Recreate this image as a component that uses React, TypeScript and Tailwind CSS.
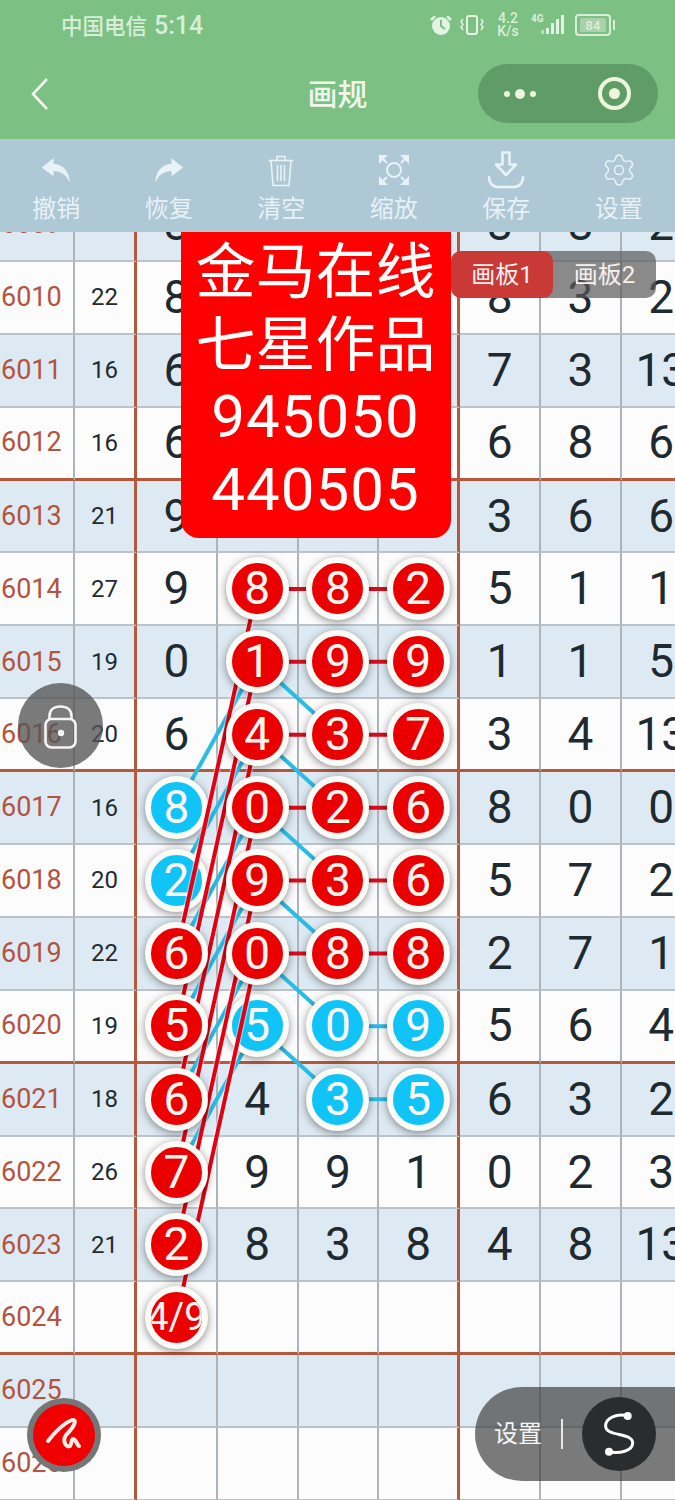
import React from "react";
import { Settings } from "lucide-react";

const SANS = "font-['Roboto','Noto_Sans_CJK_SC',sans-serif]";

type Ball = { v: string; c: "r" | "b" };
const r = (v: string): Ball => ({ v, c: "r" });
const b = (v: string): Ball => ({ v, c: "b" });
type Cell = string | Ball;

const ROWS: { id: string; sum: string; cells: Cell[] }[] = [
  { id: "6009", sum: "16", cells: ["8", "", "", "", "8", "8", "2"] },
  { id: "6010", sum: "22", cells: ["8", "", "", "", "8", "3", "2"] },
  { id: "6011", sum: "16", cells: ["6", "", "", "", "7", "3", "13"] },
  { id: "6012", sum: "16", cells: ["6", "", "", "", "6", "8", "6"] },
  { id: "6013", sum: "21", cells: ["9", "", "", "", "3", "6", "6"] },
  { id: "6014", sum: "27", cells: ["9", r("8"), r("8"), r("2"), "5", "1", "1"] },
  { id: "6015", sum: "19", cells: ["0", r("1"), r("9"), r("9"), "1", "1", "5"] },
  { id: "6016", sum: "20", cells: ["6", r("4"), r("3"), r("7"), "3", "4", "13"] },
  { id: "6017", sum: "16", cells: [b("8"), r("0"), r("2"), r("6"), "8", "0", "0"] },
  { id: "6018", sum: "20", cells: [b("2"), r("9"), r("3"), r("6"), "5", "7", "2"] },
  { id: "6019", sum: "22", cells: [r("6"), r("0"), r("8"), r("8"), "2", "7", "1"] },
  { id: "6020", sum: "19", cells: [r("5"), b("5"), b("0"), b("9"), "5", "6", "4"] },
  { id: "6021", sum: "18", cells: [r("6"), "4", b("3"), b("5"), "6", "3", "2"] },
  { id: "6022", sum: "26", cells: [r("7"), "9", "9", "1", "0", "2", "3"] },
  { id: "6023", sum: "21", cells: [r("2"), "8", "3", "8", "4", "8", "13"] },
  { id: "6024", sum: "", cells: [r("4/9"), "", "", "", "", "", ""] },
  { id: "6025", sum: "", cells: ["", "", "", "", "", "", ""] },
  { id: "6026", sum: "", cells: ["", "", "", "", "", "", ""] },
];

const ROW_H = 72.9;
const COLX = [176.4, 257.2, 338, 418.3];
const py = (i: number) => ROW_H * i + ROW_H / 2 - 1;
type Seg = [number, number, number, number];

// [column, row index, column, row index]
const CYAN: Seg[] = [
  [0, 8, 1, 6], [0, 9, 1, 7], [0, 10, 1, 8], [0, 11, 1, 9], [0, 12, 1, 10], [0, 13, 1, 11],
  [1, 6, 2, 7], [1, 7, 2, 8], [1, 8, 2, 9], [1, 9, 2, 10], [1, 10, 2, 11], [1, 11, 2, 12],
  [2, 11, 3, 11], [2, 12, 3, 12],
];
const RED_LONG: Seg[] = [
  [1, 5, 0, 10], [1, 6, 0, 11], [1, 7, 0, 12], [1, 8, 0, 13], [1, 9, 0, 14], [1, 10, 0, 15],
];
const RED_ROW: Seg[] = [
  [1, 5, 2, 5], [2, 5, 3, 5], [1, 6, 2, 6], [2, 6, 3, 6], [1, 7, 2, 7], [2, 7, 3, 7],
  [1, 8, 2, 8], [2, 8, 3, 8], [1, 9, 2, 9], [2, 9, 3, 9], [1, 10, 2, 10], [2, 10, 3, 10],
];

function Segs({ segs, color, width, opacity }: { segs: Seg[]; color: string; width: number; opacity?: number }) {
  return (
    <g stroke={color} strokeWidth={width} opacity={opacity}>
      {segs.map((s, i) => (
        <line key={i} x1={COLX[s[0]]} y1={py(s[1])} x2={COLX[s[2]]} y2={py(s[3])} />
      ))}
    </g>
  );
}

function BallView({ ball }: { ball: Ball }) {
  const red = ball.c === "r";
  return (
    <div
      className={`relative flex h-[63px] w-[63px] shrink-0 items-center justify-center rounded-full border-[6px] border-[#fbfbf8] text-[#fdf6ee] shadow-[0_2px_8px_rgba(0,0,0,0.45)] ${
        red ? "z-40 bg-[#ea0000]" : "z-20 bg-[#10c4f8]"
      } ${ball.v.length > 1 ? "overflow-hidden text-[38px]" : "text-[46px]"}`}
    >
      {ball.v}
    </div>
  );
}

function Row({ row, i }: { row: (typeof ROWS)[number]; i: number }) {
  const thick = row.id === "6012" || row.id === "6016" || row.id === "6020" || row.id === "6024";
  const bg = i % 2 === 0 ? "bg-[#deeaf3]" : "bg-[#fcfcfc]";
  const bot = thick ? "border-b-[3px] border-b-[#b5583c]" : "border-b-2 border-b-[#bcc3c8]";
  return (
    <div className={`grid h-[72.9px] grid-cols-[75px_62px_80.8px_80.8px_80.8px_80.8px_80.8px_80.8px_81px] ${bg}`}>
      <div className={`flex items-center justify-start border-r-2 border-r-[#adb4b9] pl-[1px] text-[27px] text-[#b4533f] ${bot}`}>{row.id}</div>
      <div className={`flex items-center justify-center border-r-[3px] border-r-[#b5583c] text-[24px] text-[#232a30] ${bot}`}>{row.sum}</div>
      {row.cells.map((c, j) => (
        <div
          key={j}
          className={`flex items-center justify-center whitespace-nowrap border-r-2 text-[46px] font-normal text-[#1f2a30] ${bot} ${
            j === 3 ? "border-r-[#b5583c] border-r-[3px]" : "border-r-[#adb4b9]"
          }`}
        >
          {typeof c === "string" ? c : <BallView ball={c} />}
        </div>
      ))}
    </div>
  );
}

function ToolIcon({ n }: { n: number }) {
  const c = "#e9f2f6";
  if (n === 0)
    return (
      <svg width="30" height="26" viewBox="0 0 24 21" fill={c}>
        <path d="M10 1 L0.5 8.5 L10 15.5 V11.5 C15 11.5 20 13.5 23 20.5 C23 12.5 18 6 10 5.5 Z" />
      </svg>
    );
  if (n === 1)
    return (
      <svg width="30" height="26" viewBox="0 0 24 21" fill={c}>
        <path d="M14 1 L23.5 8.5 L14 15.5 V11.5 C9 11.5 4 13.5 1 20.5 C1 12.5 6 6 14 5.5 Z" />
      </svg>
    );
  if (n === 2)
    return (
      <svg width="28" height="33" viewBox="0 0 28 33" fill="none" stroke={c} strokeWidth="1.6">
        <path d="M1.5 6.5H26.5M10 6V2.5H18V6M4 6.5L6 31.5H22L24 6.5" />
        <path d="M10.5 11V27M14 11V27M17.5 11V27" />
      </svg>
    );
  if (n === 3)
    return (
      <svg width="32" height="32" viewBox="0 0 32 32" fill="none" stroke={c} strokeWidth="2">
        <circle cx="16" cy="16" r="7" />
        <path d="M2 2L9 9M30 2L23 9M2 30L9 23M30 30L23 23" />
        <path d="M1 1H10L1 10ZM31 1H22L31 10ZM1 31H10L1 22ZM31 31H22L31 22Z" fill={c} stroke="none" />
      </svg>
    );
  if (n === 4)
    return (
      <svg width="38" height="38" viewBox="0 0 38 38" fill="none" stroke={c} strokeWidth="2.6" strokeLinejoin="round">
        <path d="M15.5 1.5H22.5V13.5H29L19 24L9 13.5H15.5Z" />
        <path d="M2 26C2 32 6 36 11 36H27C32 36 36 32 36 26" strokeLinecap="round" />
      </svg>
    );
  return <Settings size={36} strokeWidth={1} color={c} />;
}

const TOOLS = ["撤销", "恢复", "清空", "缩放", "保存", "设置"];

export default function App() {
  return (
    <div className={`relative flex h-[1500px] w-[675px] flex-col overflow-hidden bg-[#fcfcfc] ${SANS}`}>
      {/* status + nav */}
      <header className="relative z-50 h-[139px] shrink-0 bg-[#7cc084]">
        <div className="flex h-[50px] items-center pl-[61px] pr-[60px] text-[#d9eed9]">
          <span className="flex items-baseline whitespace-nowrap text-[21.5px] font-medium leading-none">
            中国电信<span className="ml-[7px] text-[25px]">5:14</span>
          </span>
          <div className="ml-auto flex items-center">
            <svg width="24" height="22" viewBox="0 0 24 22" className="mr-[6px]" fill="#e4f3e4">
              <circle cx="12" cy="12" r="9" />
              <path d="M1 5L5 1.5L7 3L3 7ZM23 5L19 1.5L17 3L21 7Z" />
              <path d="M12 6V12L16 15" stroke="#7cc084" strokeWidth="2" fill="none" />
            </svg>
            <svg width="26" height="22" viewBox="0 0 26 22" className="mr-[10px]" fill="none" stroke="#e4f3e4" strokeWidth="2">
              <rect x="8" y="2" width="10" height="18" rx="2" />
              <path d="M4 5L2 7.5L4 10.5L2 13L4 16M22 5L24 7.5L22 10.5L24 13L22 16" strokeWidth="1.5" />
            </svg>
            <div className="mr-[10px] flex w-[26px] flex-col items-center text-[14px] font-medium leading-[13px]">
              <span>4.2</span>
              <span>K/s</span>
            </div>
            <div className="relative mr-[10px] h-[22px] w-[34px]">
              <span className="absolute left-0 top-[-3px] text-[10px] font-bold">4G</span>
              <svg width="34" height="22" viewBox="0 0 34 22" fill="#e4f3e4" className="absolute inset-0">
                <rect x="10" y="16" width="3" height="4" opacity=".6" />
                <rect x="15" y="14" width="3" height="6" />
                <rect x="20" y="9" width="3" height="11" />
                <rect x="25" y="5" width="3" height="15" />
                <rect x="30" y="1" width="3" height="19" />
              </svg>
            </div>
            <div className="flex h-[22px] w-[36px] items-center justify-center rounded-[4px] border-2 border-[#d9eed9]">
              <span className="flex h-[14px] w-[26px] items-center justify-center rounded-[1px] bg-[#a9d1ac] text-[13px] font-medium leading-none">84</span>
            </div>
            <div className="ml-[2px] h-[10px] w-[2px] bg-[#d9eed9]" />
          </div>
        </div>
        <div className="relative flex h-[89px] items-center justify-center">
          <svg width="18" height="34" viewBox="0 0 18 34" fill="none" stroke="#f3f7ef" strokeWidth="2.6" className="absolute left-[31px] top-[27px]">
            <path d="M16 2L2 17L16 32" />
          </svg>
          <h1 className="text-[30px] font-medium leading-none text-[#eff6ea]">画规</h1>
          <div className="absolute right-[17px] top-[14px] flex h-[59px] w-[180px] items-center rounded-full bg-[#5f9c68]">
            <div className="ml-[26px] flex items-center gap-[5px]">
              <span className="h-[6px] w-[6px] rounded-full bg-[#eef5dc]" />
              <span className="h-[10px] w-[10px] rounded-full bg-[#eef5dc]" />
              <span className="h-[6px] w-[6px] rounded-full bg-[#eef5dc]" />
            </div>
            <div className="ml-auto mr-[27px] flex h-[33px] w-[33px] items-center justify-center rounded-full border-[4px] border-[#eef5dc]">
              <span className="h-[11px] w-[11px] rounded-full bg-[#eef5dc]" />
            </div>
          </div>
        </div>
      </header>

      {/* toolbar */}
      <nav className="relative z-50 grid h-[93px] shrink-0 grid-cols-6 bg-[#aec8d6] pt-[11px]">
        {TOOLS.map((t, i) => (
          <div key={t} className="flex flex-col items-center">
            <div className="flex h-[40px] items-center justify-center">
              <ToolIcon n={i} />
            </div>
            <span className="mt-[5px] text-[24px] leading-[28px] text-[#e8f1f5]">{t}</span>
          </div>
        ))}
      </nav>

      {/* board */}
      <main className="relative min-h-0 flex-1 overflow-hidden">
        <div className="relative mt-[-43px] w-[703px]">
          {ROWS.map((row, i) => (
            <Row key={row.id} row={row} i={i} />
          ))}
          <svg className="absolute left-0 top-0 z-10" width={703} height={1320} fill="none">
            <Segs segs={CYAN} color="#28bce6" width={4} />
          </svg>
          <svg className="absolute left-0 top-0 z-30" width={703} height={1320} fill="none">
            <Segs segs={RED_ROW} color="#d80f1c" width={4} />
            <Segs segs={RED_LONG} color="#ffffff" width={6.5} opacity={0.45} />
            <Segs segs={RED_LONG} color="#e40012" width={4} />
          </svg>
        </div>

        {/* notice */}
        <div className="absolute left-[181px] top-0 z-[45] flex h-[306px] w-[270px] flex-col items-center rounded-b-[18px] bg-[#ff0000] pr-[1px] pt-[4px] text-[60px] leading-[73px] text-white">
          <span>金马在线</span>
          <span>七星作品</span>
          <span className="mt-[-2px] tracking-[1px]">945050</span>
          <span className="tracking-[1px]">440505</span>
        </div>

        {/* board tabs */}
        <div className="absolute left-[451px] top-[19px] z-[46] flex h-[47px] w-[205px] rounded-[10px] bg-[rgba(90,90,90,0.7)] text-[24px] text-[#f4f0ee]">
          <div className="flex w-[102px] items-center justify-center rounded-[10px] bg-[#c93a37]">画板1</div>
          <div className="flex flex-1 items-center justify-center">画板2</div>
        </div>

        {/* lock */}
        <div className="absolute left-[18px] top-[451px] z-[46] flex h-[85px] w-[85px] items-center justify-center rounded-full bg-[rgba(85,85,85,0.78)]">
          <svg width="33" height="44" viewBox="0 0 33 44" fill="none" stroke="#f4f4f4" strokeWidth="2.6" className="mt-[2px]">
            <rect x="1.5" y="14" width="30" height="28.5" rx="6" />
            <path d="M5.5 14V11C5.5 5 10 1.5 16.5 1.5C23 1.5 27.5 5 27.5 11V14" />
            <circle cx="17" cy="28" r="3.2" fill="#f4f4f4" stroke="none" />
          </svg>
        </div>

        {/* pen */}
        <div className="absolute left-[27px] top-[1166px] z-[46] flex h-[74px] w-[74px] items-center justify-center rounded-full bg-[#767676]">
          <div className="flex h-[62px] w-[62px] items-center justify-center rounded-full bg-[#f00000]">
            <svg width="40" height="40" viewBox="0 0 40 40" fill="none" stroke="#fdeee8" strokeWidth="4" strokeLinecap="round" strokeLinejoin="round">
              <path d="M4 26C10 18 20 8 28 5C34 4 30 12 22 20C18 26 22 33 26 31C28 29 27 24 29 24C32 24 33 30 35 31" />
            </svg>
          </div>
        </div>

        {/* settings pill */}
        <div className="absolute left-[475px] top-[1155px] z-[46] flex h-[94px] w-[200px] items-center rounded-l-[47px] bg-[rgba(55,55,55,0.66)]">
          <span className="ml-[19px] text-[24px] text-[#f5f5f5]">设置</span>
          <div className="ml-[19px] h-[30px] w-[1.5px] bg-[#e8e8e8]" />
          <div className="ml-[19px] flex h-[74px] w-[74px] items-center justify-center rounded-full bg-[#2a2d2f]">
            <svg width="44" height="48" viewBox="0 0 44 48" fill="none" stroke="#fdfdfd" strokeWidth="3">
              <path d="M30.7 6C20 3 8.6 8 8.6 16C8.6 27 35.7 22 35.7 33C35.7 41 22 44 12 41.7" />
              <circle cx="30.7" cy="6" r="4" fill="#fdfdfd" stroke="none" />
              <circle cx="12" cy="41.7" r="4" fill="#fdfdfd" stroke="none" />
            </svg>
          </div>
        </div>
      </main>
    </div>
  );
}
